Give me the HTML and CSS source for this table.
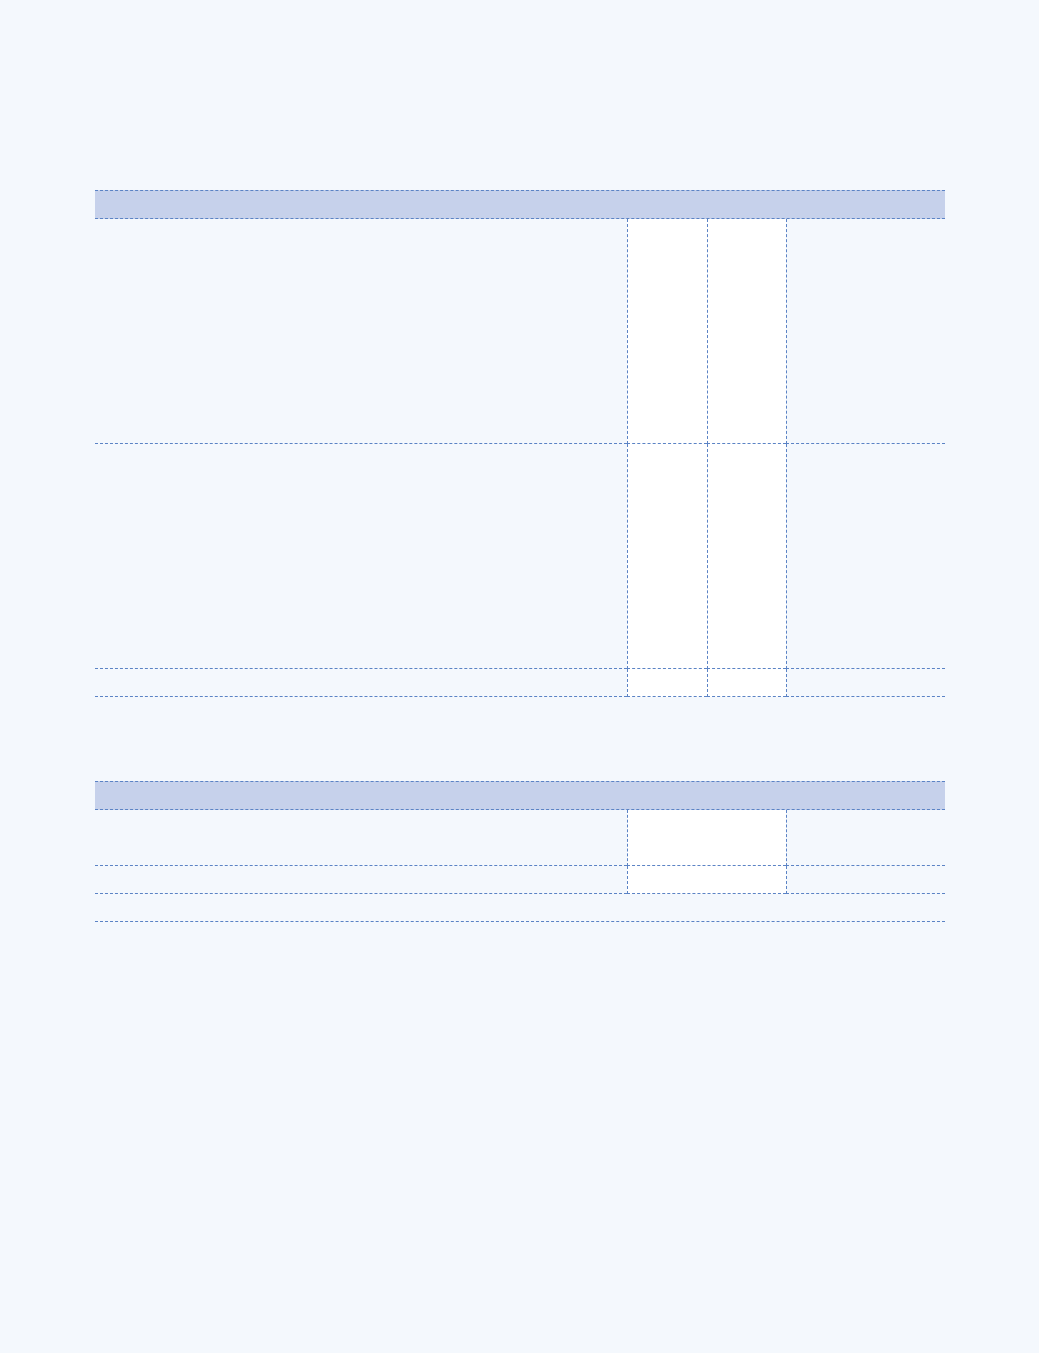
FILE: index.html
```html
<!DOCTYPE html>
<html>
<head>
<meta charset="utf-8">
<link rel="stylesheet" href="styles.css">
</head>
<body>
<div class="page">
  <table class="sheet sheet-a">
    <colgroup>
      <col class="c-main"><col class="c-narrow"><col class="c-narrow2"><col class="c-side">
    </colgroup>
    <thead>
      <tr class="head"><th colspan="4"></th></tr>
    </thead>
    <tbody>
      <tr class="tall"><td class="plain"></td><td class="fill"></td><td class="fill"></td><td class="plain"></td></tr>
      <tr class="tall"><td class="plain"></td><td class="fill"></td><td class="fill"></td><td class="plain"></td></tr>
      <tr class="short"><td class="plain"></td><td class="fill"></td><td class="fill"></td><td class="plain"></td></tr>
    </tbody>
  </table>

  <table class="sheet sheet-b">
    <colgroup>
      <col class="c-main"><col class="c-wide"><col class="c-side">
    </colgroup>
    <thead>
      <tr class="head"><th colspan="3"></th></tr>
    </thead>
    <tbody>
      <tr class="mid"><td class="plain"></td><td class="fill"></td><td class="plain"></td></tr>
      <tr class="short"><td class="plain"></td><td class="fill"></td><td class="plain"></td></tr>
      <tr class="short"><td class="plain" colspan="3"></td></tr>
    </tbody>
  </table>
</div>
</body>
</html>
```

FILE: styles.css
```css
html, body {
  margin: 0;
  padding: 0;
  background: #f4f8fd;
  font-family: "Liberation Sans", Arial, sans-serif;
}

.page {
  padding: 190px 94px 0 95px;
  display: flex;
  flex-direction: column;
  gap: 84px;
}

.sheet {
  width: 850px;
  border-collapse: separate;
  border-spacing: 0;
  table-layout: fixed;
}

.sheet th,
.sheet td {
  padding: 0;
  border: none;
  border-bottom: 1px dashed #5b83c5;
}

.sheet td + td { border-left: 1px dashed #5b83c5; }

.head th {
  height: 27px;
  background: #c6d1eb;
  border-top: 1px dashed #5b83c5;
}

.sheet-a .c-main { width: 532px; }
.sheet-a .c-narrow { width: 80px; }
.sheet-a .c-narrow2 { width: 79px; }
.sheet-a .c-side { width: 159px; }

.sheet-b .c-main { width: 532px; }
.sheet-b .c-wide { width: 159px; }
.sheet-b .c-side { width: 159px; }

.tall td { height: 224px; }
.mid td { height: 55px; }
.short td { height: 27px; }

.fill { background: #ffffff; }
.plain { background: transparent; }
```
